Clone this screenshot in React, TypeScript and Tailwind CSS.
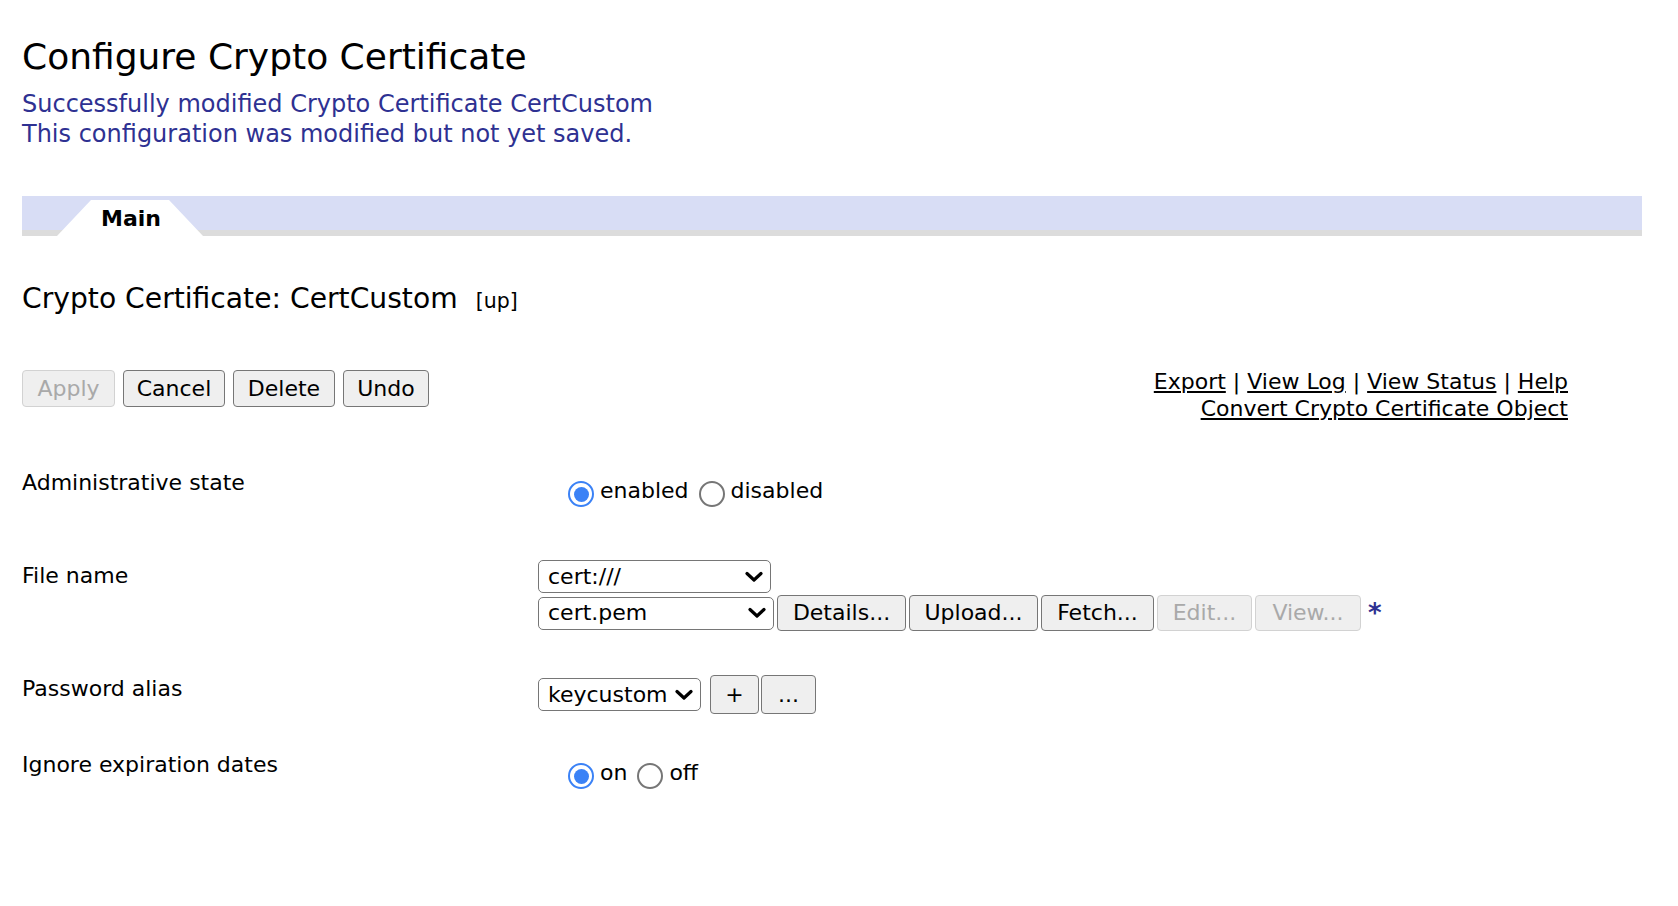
import type { ReactNode } from "react";

const font = "font-['DejaVu_Sans','Verdana',sans-serif]";

function Chevron() {
  return (
    <svg width="18" height="12" viewBox="0 0 18 12" className="shrink-0">
      <path d="M2 2.5 L9 9 L16 2.5" fill="none" stroke="#000" strokeWidth="3.2" strokeLinecap="round" strokeLinejoin="round" />
    </svg>
  );
}

function Select({ value, width }: { value: string; width: string }) {
  return (
    <div
      className={`flex h-[33px] items-center justify-between rounded-[5px] border-[1.5px] border-[#767676] bg-white pl-[9px] pr-[7px] text-[22px] leading-none text-black ${width}`}
    >
      <span>{value}</span>
      <Chevron />
    </div>
  );
}

function Btn({ children, disabled, className = "" }: { children: ReactNode; disabled?: boolean; className?: string }) {
  return (
    <button
      type="button"
      className={`flex items-center justify-center rounded-[4px] border-[1.5px] bg-[#efefef] text-[22px] leading-none ${
        disabled ? "border-[#d2d2d2] text-[#a9a9a9]" : "border-[#767676] text-black"
      } ${className}`}
    >
      {children}
    </button>
  );
}

function Radio({ checked }: { checked?: boolean }) {
  return checked ? (
    <span className="mt-[4px] flex h-[26px] w-[26px] shrink-0 items-center justify-center rounded-full border-[2.5px] border-[#3b82f6] bg-white">
      <span className="h-[15px] w-[15px] rounded-full bg-[#3b82f6]" />
    </span>
  ) : (
    <span className="mt-[4px] h-[26px] w-[26px] shrink-0 rounded-full border-[2px] border-[#767676] bg-white" />
  );
}

function RadioGroup({ options }: { options: { label: string; checked?: boolean }[] }) {
  return (
    <div className="flex items-start pl-[30px] pt-[8px] text-[22px] leading-[27px]">
      {options.map((o, i) => (
        <div key={o.label} className={`flex items-start gap-[6px] ${i > 0 ? "ml-[10px]" : ""}`}>
          <Radio checked={o.checked} />
          <span>{o.label}</span>
        </div>
      ))}
    </div>
  );
}

function Row({ label, children, className = "", labelPad = "" }: { label: string; children: ReactNode; className?: string; labelPad?: string }) {
  return (
    <div className={`flex items-start ${className}`}>
      <div className={`w-[516px] shrink-0 text-[22px] leading-[27px] ${labelPad}`}>{label}</div>
      {children}
    </div>
  );
}

export default function App() {
  return (
    <div className={`min-h-[906px] bg-white px-[22px] text-black ${font}`}>
      <h1 className="pt-[37px] text-[36px] font-normal leading-[40px]">Configure Crypto Certificate</h1>
      <div className="mt-[12px] text-[24px] leading-[30px] text-[#2e3192]">
        <div>Successfully modified Crypto Certificate CertCustom</div>
        <div>This configuration was modified but not yet saved.</div>
      </div>

      {/* tab strip */}
      <div className="mt-[47px] flex h-[40px] w-[1620px] items-end border-b-[6px] border-[#dcdcdc] bg-[#d8ddf5]">
        <div className="relative -mb-[6px] ml-[35px] flex h-[36px] w-[146px] items-center justify-center bg-white pl-[2px] text-[22px] font-bold [clip-path:polygon(34px_0,112px_0,146px_100%,0_100%)]">
          Main
        </div>
      </div>

      <div className="mt-[46px] flex items-baseline text-[28.2px] leading-[34px]">
        <span>Crypto Certificate: CertCustom</span>
        <span className="ml-[18px] text-[20.5px]">[up]</span>
      </div>

      <div className="mt-[47px] flex w-[1546px] items-start justify-between">
        <div className="mt-[5px] flex gap-[8px]">
          <Btn disabled className="h-[37px] w-[93px]">Apply</Btn>
          <Btn className="h-[37px] w-[102px]">Cancel</Btn>
          <Btn className="h-[37px] w-[102px]">Delete</Btn>
          <Btn className="h-[37px] w-[86px]">Undo</Btn>
        </div>
        <div className="flex flex-col items-end pt-[3px] text-[22px] leading-[27px]">
          <div>
            <a href="#" className="underline">Export</a> | <a href="#" className="underline">View Log</a> |{" "}
            <a href="#" className="underline">View Status</a> | <a href="#" className="underline">Help</a>
          </div>
          <a href="#" className="underline">Convert Crypto Certificate Object</a>
        </div>
      </div>

      <Row label="Administrative state" className="mt-[47px]">
        <RadioGroup options={[{ label: "enabled", checked: true }, { label: "disabled" }]} />
      </Row>

      <Row label="File name" className="mt-[53px]" labelPad="pt-[2px]">
        <div className="flex flex-col gap-[2px]">
          <Select value="cert:///" width="w-[233px]" />
          <div className="flex h-[36px] items-center gap-[3px]">
            <Select value="cert.pem" width="w-[236px]" />
            <Btn className="h-[36px] w-[129px]">Details...</Btn>
            <Btn className="h-[36px] w-[129px]">Upload...</Btn>
            <Btn className="h-[36px] w-[113px]">Fetch...</Btn>
            <Btn disabled className="h-[36px] w-[95px]">Edit...</Btn>
            <Btn disabled className="h-[36px] w-[106px]">View...</Btn>
            <span className="ml-[4px] text-[26px] font-bold leading-none text-[#2e3192]">*</span>
          </div>
        </div>
      </Row>

      <Row label="Password alias" className="mt-[44px]">
        <div className="flex h-[39px] items-center">
          <Select value="keycustom" width="w-[163px]" />
          <Btn className="ml-[9px] h-[39px] w-[49px]">+</Btn>
          <Btn className="ml-[2px] h-[39px] w-[55px]">...</Btn>
        </div>
      </Row>

      <Row label="Ignore expiration dates" className="mt-[37px]">
        <RadioGroup options={[{ label: "on", checked: true }, { label: "off" }]} />
      </Row>
    </div>
  );
}
